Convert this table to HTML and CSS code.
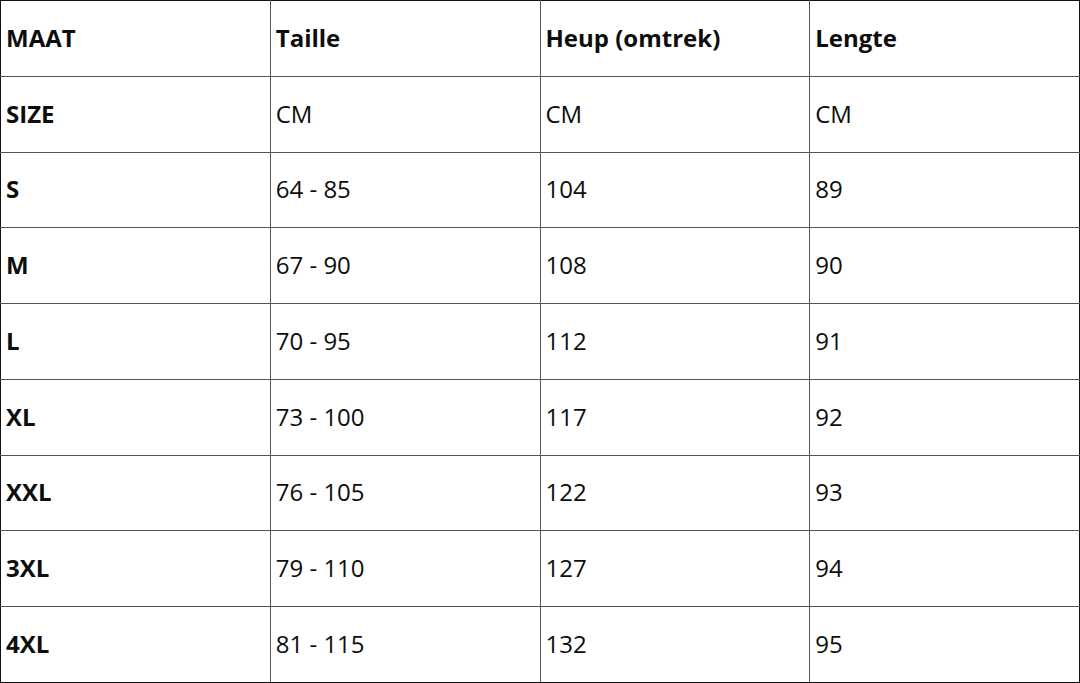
FILE: index.html
```html
<!DOCTYPE html>
<html>
<head>
<meta charset="utf-8">
<link rel="stylesheet" href="styles.css">
</head>
<body>
<table class="size-table">
  <tr class="head"><td>MAAT</td><td>Taille</td><td>Heup (omtrek)</td><td>Lengte</td></tr>
  <tr><th>SIZE</th><td>CM</td><td>CM</td><td>CM</td></tr>
  <tr><th>S</th><td>64 - 85</td><td>104</td><td>89</td></tr>
  <tr><th>M</th><td>67 - 90</td><td>108</td><td>90</td></tr>
  <tr><th>L</th><td>70 - 95</td><td>112</td><td>91</td></tr>
  <tr><th>XL</th><td>73 - 100</td><td>117</td><td>92</td></tr>
  <tr><th>XXL</th><td>76 - 105</td><td>122</td><td>93</td></tr>
  <tr><th>3XL</th><td>79 - 110</td><td>127</td><td>94</td></tr>
  <tr><th>4XL</th><td>81 - 115</td><td>132</td><td>95</td></tr>
</table>
</body>
</html>
```
FILE: styles.css
```css
html, body {
  margin: 0;
  padding: 0;
  background: #fff;
}
.size-table {
  width: 1080px;
  height: 683px;
  border-collapse: collapse;
  table-layout: fixed;
  font-family: "Open Sans", sans-serif;
  font-size: 24px;
  color: #0d0d0d;
  border: 1px solid #111;
}
.size-table td, .size-table th {
  border: 1px solid #555;
  padding: 0 5px 2px;
  text-align: left;
  vertical-align: middle;
  font-weight: 400;
  height: 60px;
}
.size-table th {
  font-weight: 700;
}
.size-table .head td {
  font-weight: 700;
}
.size-table tr:first-child td { border-top: 1px solid #111; }
.size-table tr:last-child td, .size-table tr:last-child th { border-bottom: 1px solid #111; }
.size-table tr > :first-child { border-left: 1px solid #111; }
.size-table tr > :last-child { border-right: 1px solid #111; }
```
